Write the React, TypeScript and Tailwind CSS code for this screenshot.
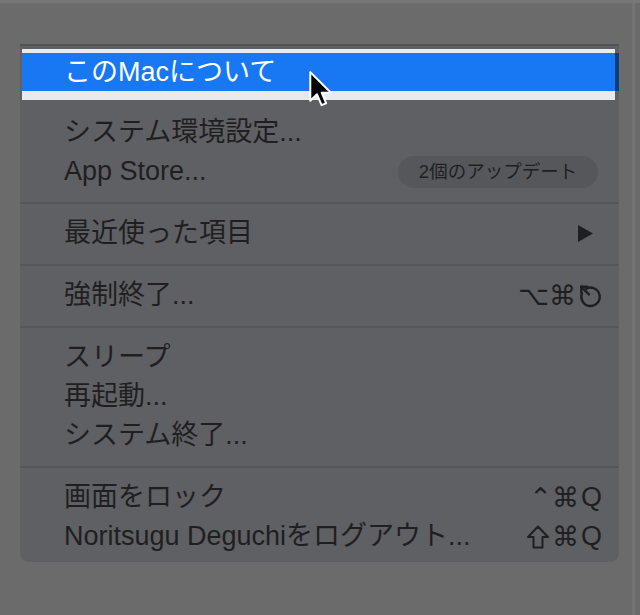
import React from "react";

const FONT = { fontFamily: '"Liberation Sans", "Noto Sans CJK JP", sans-serif' };
const SYM = { fontFamily: '"DejaVu Sans", "Liberation Sans", sans-serif' };

function EscGlyph() {
  return (
    <svg width="24" height="26" viewBox="0 0 22 24" fill="none" stroke="#1f1f21" strokeWidth="2.2" strokeLinecap="round" strokeLinejoin="round">
      <path d="M7.5 5.2 A8.5 8.5 0 1 1 3.6 9.5" />
      <path d="M3 3.5 L10 10.5" />
      <path d="M3 3.5 L3 9" />
      <path d="M3 3.5 L8.5 3.5" />
    </svg>
  );
}

function ShiftGlyph() {
  return (
    <svg width="24" height="26" viewBox="0 0 24 26" fill="none" stroke="#1f1f21" strokeWidth="2" strokeLinejoin="round">
      <path d="M12 2.5 L22 13 L16.5 13 L16.5 23.5 L7.5 23.5 L7.5 13 L2 13 Z" />
    </svg>
  );
}

function Shortcut({ keys }: { keys: React.ReactNode }) {
  return <div className="flex items-center gap-[2px] text-[27px] leading-none text-[#1f1f21]">{keys}</div>;
}

function Row({ label, right }: { label: string; right?: React.ReactNode }) {
  return (
    <div className="flex h-[39px] items-center justify-between pl-[44px] pr-[17px]">
      <span className="text-[27px] leading-[39px] text-[#1f1f21]">{label}</span>
      {right}
    </div>
  );
}

function Sep() {
  return (
    <div className="flex h-[23px] flex-col justify-center">
      <div className="h-[2px] bg-[#555659]" />
    </div>
  );
}

function Cursor() {
  return (
    <svg className="absolute left-[308px] top-[67px]" width="26" height="40" viewBox="0 0 18 28">
      <path
        d="M1.5 1.5 L1.5 21.5 L6.2 17 L9.4 24.6 L12.6 23.3 L9.5 15.9 L16 15.9 Z"
        fill="#000"
        stroke="#fff"
        strokeWidth="1.4"
        strokeLinejoin="round"
      />
    </svg>
  );
}

export default function App() {
  return (
    <div className="relative flex h-[615px] w-[640px] overflow-hidden border-t-[3px] border-[#777777] bg-[#6b6b6b]" style={FONT}>
      <div className="w-[632px] pl-[20px] pt-[41px]">
        <div className="w-[599px] overflow-hidden rounded-b-[9px] border-t-[2px] border-[#515255] bg-[#5f6064] pb-[6px]">
          <div className="pt-[3px]">
            <div className="ml-[2px] mr-[4px] bg-[#e8eaee] pb-[9px] pt-[4px]">
              <div className="-mr-[4px] flex h-[38px] items-center border-r-[4px] border-[#0b3c80] bg-[#1877f2] pl-[42px]">
                <span className="text-[27px] leading-[38px] text-white">このMacについて</span>
              </div>
            </div>
          </div>

          <div className="pt-[13px]">
            <Row label="システム環境設定..." />
            <Row
              label="App Store..."
              right={
                <div className="mr-[4px] flex h-[32px] w-[200px] items-center justify-center rounded-full bg-[#56575a] text-[18.5px] text-[#1f1f21]">
                  2個のアップデート
                </div>
              }
            />
          </div>
          <Sep />
          <Row
            label="最近使った項目"
            right={
              <svg width="17" height="19" viewBox="0 0 17 19" className="mr-[8px]">
                <path d="M1 1 L16 9.5 L1 18 Z" fill="#1f1f21" />
              </svg>
            }
          />
          <Sep />
          <Row
            label="強制終了..."
            right={
              <Shortcut
                keys={
                  <>
                    <span style={SYM}>⌥⌘</span>
                    <EscGlyph />
                  </>
                }
              />
            }
          />
          <Sep />
          <Row label="スリープ" />
          <Row label="再起動..." />
          <Row label="システム終了..." />
          <Sep />
          <Row
            label="画面をロック"
            right={
              <Shortcut
                keys={
                  <>
                    <span style={SYM}>⌃⌘</span>
                    <span>Q</span>
                  </>
                }
              />
            }
          />
          <Row
            label="Noritsugu Deguchiをログアウト..."
            right={
              <Shortcut
                keys={
                  <>
                    <ShiftGlyph />
                    <span style={SYM}>⌘</span>
                    <span>Q</span>
                  </>
                }
              />
            }
          />
        </div>
      </div>
      <div className="w-[3px] bg-[#747474]" />
      <Cursor />
    </div>
  );
}
